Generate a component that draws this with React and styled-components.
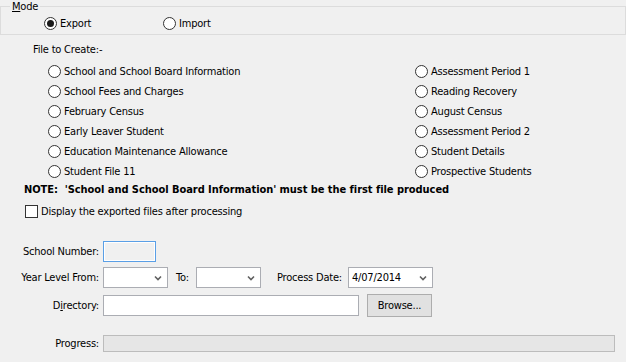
import React from "react";
import styled, { createGlobalStyle } from "styled-components";

// Global page setup
const GlobalStyle = createGlobalStyle`
  html, body {
    margin: 0;
    padding: 0;
    background: #f0f0f0;
  }
  body {
    font-family: "DejaVu Sans Condensed", "DejaVu Sans", sans-serif;
    font-stretch: condensed;
    font-size: 11px;
    letter-spacing: -0.2px;
    color: #000;
  }
`;

const Page = styled.div`
  width: 626px;
  height: 362px;
  background: #f0f0f0;
  overflow: hidden;
`;

// Mode group box
const GroupBox = styled.fieldset`
  margin: 0;
  width: 626px;
  box-sizing: border-box;
  border: 1px solid #dcdcdc;
  padding: 0 0 1px 0;
`;

const Legend = styled.legend`
  padding: 0 2px;
  margin-left: 9px;
  line-height: 13px;
  height: 13px;
`;

const ModeRow = styled.div`
  display: flex;
  padding-left: 43px;
`;

const Key = styled.span`
  text-decoration: underline;
`;

const RadioItem = styled.label`
  display: flex;
  align-items: center;
  height: 20px;
  width: ${(p) => p.$width || "auto"};
  white-space: nowrap;
`;

const RadioCircle = styled.span`
  width: 13px;
  height: 13px;
  box-sizing: border-box;
  border-radius: 50%;
  border: 1px solid #333;
  background: #fff;
  margin-right: 3px;
  flex: none;
  display: flex;
  align-items: center;
  justify-content: center;

  &::after {
    content: "";
    display: ${(p) => (p.$checked ? "block" : "none")};
    width: 7px;
    height: 7px;
    border-radius: 50%;
    background: #1a1a1a;
  }
`;

const Radio = ({ label, checked, width }) => (
  <RadioItem $width={width}>
    <RadioCircle $checked={checked} />
    {label}
  </RadioItem>
);

const Caption = styled.div`
  margin: 8px 0 0 33px;
  line-height: 14px;
`;

const FileGrid = styled.div`
  display: grid;
  grid-template-columns: 367px auto;
  grid-auto-flow: column;
  grid-template-rows: repeat(6, 20px);
  padding-left: 48px;
  margin-top: 4px;
`;

const Note = styled.div`
  margin-left: 24px;
  line-height: 18px;
  font-weight: bold;
  letter-spacing: -0.05px;
`;

const CheckRow = styled.label`
  display: flex;
  align-items: center;
  height: 18px;
  margin: 3px 0 0 25px;
`;

const CheckBox = styled.span`
  width: 13px;
  height: 13px;
  box-sizing: border-box;
  border: 1px solid #333;
  background: #fff;
  margin-right: 3px;
`;

// Lower form
const Form = styled.div`
  margin-top: 21px;
`;

const FormRow = styled.div`
  display: flex;
  align-items: center;
  height: ${(p) => p.$height}px;
  margin-top: ${(p) => p.$gap || 0}px;
`;

const Label = styled.span`
  text-align: right;
  margin-right: ${(p) => p.$right ?? 4}px;
  margin-left: ${(p) => p.$left || 0}px;
  width: ${(p) => (p.$auto ? "auto" : "99px")};
  white-space: nowrap;
`;

const TextBox = styled.div`
  width: ${(p) => p.$width}px;
  height: ${(p) => p.$height || 21}px;
  box-sizing: border-box;
  border: 1px solid ${(p) => (p.$focused ? "#5a9fe6" : "#abadb3")};
  box-shadow: ${(p) => (p.$focused ? "inset 0 0 0 1px #fff" : "none")};
  background: ${(p) => (p.$disabled ? "#f0f0f0" : "#fff")};
`;

const Select = styled.div`
  width: ${(p) => p.$width}px;
  height: 21px;
  box-sizing: border-box;
  border: 1px solid #abadb3;
  background: #fff;
  display: flex;
  align-items: center;
  padding: 0 5px 0 3px;
`;

const SelectValue = styled.span`
  flex: 1;
`;

const Chevron = () => (
  <svg width="8" height="6" viewBox="0 0 8 6">
    <path d="M1 1.5 L4 4.5 L7 1.5" fill="none" stroke="#606060" strokeWidth="1.6" />
  </svg>
);

const Button = styled.div`
  width: 65px;
  height: 23px;
  box-sizing: border-box;
  border: 1px solid #adadad;
  background: #e1e1e1;
  display: flex;
  align-items: center;
  justify-content: center;
  margin-left: 8px;
`;

const ProgressBar = styled.div`
  width: 512px;
  height: 17px;
  box-sizing: border-box;
  border: 1px solid #bcbcbc;
  background: #e6e6e6;
`;

const leftFiles = [
  "School and School Board Information",
  "School Fees and Charges",
  "February Census",
  "Early Leaver Student",
  "Education Maintenance Allowance",
  "Student File 11",
];

const rightFiles = [
  "Assessment Period 1",
  "Reading Recovery",
  "August Census",
  "Assessment Period 2",
  "Student Details",
  "Prospective Students",
];

const App = () => {
  return (
    <Page>
      <GlobalStyle />
      {/* Mode */}
      <GroupBox>
        <Legend>
          <Key>M</Key>ode
        </Legend>
        <ModeRow>
          <Radio label="Export" checked width="119px" />
          <Radio label="Import" />
        </ModeRow>
      </GroupBox>

      <Caption>File to Create:-</Caption>
      <FileGrid>
        {[...leftFiles, ...rightFiles].map((f) => (
          <Radio key={f} label={f} />
        ))}
      </FileGrid>

      <Note>NOTE:&nbsp; 'School and School Board Information' must be the first file produced</Note>
      <CheckRow>
        <CheckBox />
        Display the exported files after processing
      </CheckRow>

      {/* Lower form */}
      <Form>
        <FormRow $height={21}>
          <Label>School Number:</Label>
          <TextBox $width={53} $focused $disabled />
        </FormRow>
        <FormRow $height={21} $gap={5}>
          <Label>Year Level From:</Label>
          <Select $width={65}>
            <SelectValue />
            <Chevron />
          </Select>
          <Label $auto $left={8} $right={7}>
            To:
          </Label>
          <Select $width={65}>
            <SelectValue />
            <Chevron />
          </Select>
          <Label $auto $left={16} $right={6}>
            Process Date:
          </Label>
          <Select $width={85}>
            <SelectValue>4/07/2014</SelectValue>
            <Chevron />
          </Select>
        </FormRow>
        <FormRow $height={23} $gap={6}>
          <Label>
            D<Key>i</Key>rectory:
          </Label>
          <TextBox $width={256} />
          <Button>Browse...</Button>
        </FormRow>
        <FormRow $height={17} $gap={18}>
          <Label>Progress:</Label>
          <ProgressBar />
        </FormRow>
      </Form>
    </Page>
  );
};

export default App;
